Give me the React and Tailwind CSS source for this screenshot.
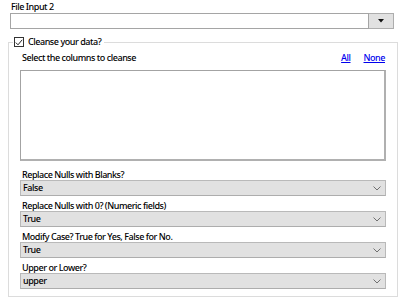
import React from 'react';

const Select = ({ label, value }) => (
  <div className="flex flex-col">
    <div className="h-[11px] leading-[11px] pl-[2px]">{label}</div>
    <div className="h-[16px] flex items-center justify-between bg-[#e1e1e1] border border-[#b9b9b9] border-b-[#adadad] pl-[2px] pr-[4px]">
      <span className="leading-[14px]">{value}</span>
      <svg width="8" height="5" viewBox="0 0 8 5" className="text-[#707070]">
        <path d="M0.5 0.5 L4 4 L7.5 0.5" fill="none" stroke="currentColor" strokeWidth="1" />
      </svg>
    </div>
  </div>
);

const App = () => {
  const selects = [
    { label: 'Replace Nulls with Blanks?', value: 'False' },
    { label: 'Replace Nulls with 0? (Numeric fields)', value: 'True' },
    { label: 'Modify Case? True for Yes, False for No.', value: 'True' },
    { label: 'Upper or Lower?', value: 'upper' },
  ];

  return (
    <div className="w-[400px] h-[304px] bg-white text-black text-[9px] font-medium tracking-[-0.45px] font-['Noto_Sans',sans-serif] overflow-hidden">
      {/* file input */}
      <div className="pl-[11px] pt-[1px] h-[13px] leading-[12px]">File Input 2</div>
      <div className="flex ml-[10px] h-[16px]">
        <div className="w-[359px] border border-[#a5a5a5] bg-white"></div>
        <div className="w-[25px] flex items-center justify-center bg-[#e1e1e1] border border-[#adadad] border-l-0">
          <svg width="6" height="4" viewBox="0 0 6 4">
            <path d="M0 0 L6 0 L3 3.5 Z" fill="#111" />
          </svg>
        </div>
      </div>

      {/* group box */}
      <fieldset className="mt-[7px] ml-[8px] w-[390px] h-[261px] border border-[#dcdcdc] px-[11px] pb-[7px]">
        <legend className="ml-[-7px] px-[1px] h-[12px] flex items-center gap-[4px]">
          <span className="w-[10px] h-[10px] border border-[#333] bg-white flex items-center justify-center">
            <svg width="8" height="7" viewBox="0 0 8 7">
              <path d="M0.8 3.6 L3 5.8 L7.2 0.8" fill="none" stroke="#222" strokeWidth="1" />
            </svg>
          </span>
          <span className="leading-[12px] pr-[2px]">Cleanse your data?</span>
        </legend>

        <div className="flex items-end justify-between pt-[4px] h-[16px]">
          <span className="pl-[2px] leading-[12px]">Select the columns to cleanse</span>
          <div className="flex gap-[13px] pr-[1px] leading-[12px]">
            <a href="#" className="text-[#0000ee] underline">All</a>
            <a href="#" className="text-[#0000ee] underline">None</a>
          </div>
        </div>
        <div className="mt-[6px] h-[91px] border border-[#a3a3a3] border-r-2 border-b-2 border-r-[#b0b0b0] border-b-[#b0b0b0] bg-white"></div>

        <div className="mt-[8px] flex flex-col gap-[4px]">
          {selects.map((s, i) => (
            <Select key={i} label={s.label} value={s.value} />
          ))}
        </div>
      </fieldset>
    </div>
  );
};

export default App;
